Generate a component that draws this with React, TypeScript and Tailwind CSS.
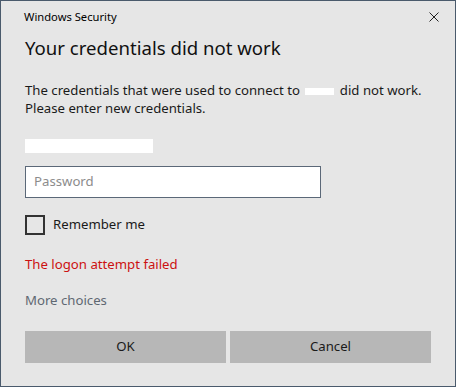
const App = () => {
  return (
    <div
      className="w-[456px] h-[387px] border border-[#4a5a6c] bg-[#e6e6e6] text-[#1a1a1a] flex flex-col"
      style={{ fontFamily: '"Noto Sans", "Open Sans", sans-serif' }}
    >
      {/* title bar */}
      <div className="flex items-center justify-between h-[32px] pl-[23px] pr-[16px]">
        <span className="text-[11.2px] leading-none text-black">Windows Security</span>
        <svg width="10" height="10" viewBox="0 0 10 10">
          <path d="M0.5 0.5 L9.5 9.5 M9.5 0.5 L0.5 9.5" stroke="#222" strokeWidth="1" />
        </svg>
      </div>

      <div className="flex flex-col px-[24px]">
        <h1 className="text-[18.6px] leading-[26px] mt-[2px] text-[#111]">Your credentials did not work</h1>

        <p className="text-[13.2px] leading-[18px] mt-[20px]">
          The credentials that were used to connect to{" "}
          <span className="inline-block w-[29px] h-[7px] bg-white align-middle mx-[2px]" />{" "}
          did not work.
          <br />
          Please enter new credentials.
        </p>

        <div className="w-[128px] h-[14px] bg-white mt-[22px]" />

        <div className="w-[296px] h-[32px] border border-[#5b6878] bg-white mt-[13px] flex items-center pl-[8px]">
          <span className="text-[13.2px] text-[#8c8c8c]">Password</span>
        </div>

        <div className="flex items-center gap-[8px] mt-[17px]">
          <div className="w-[20px] h-[20px] border-2 border-[#333]" />
          <span className="text-[13.2px]">Remember me</span>
        </div>

        <div className="text-[13.2px] text-[#cc1111] mt-[20px]">The logon attempt failed</div>

        <div className="text-[13.2px] text-[#5f6872] mt-[16px]">More choices</div>

        <div className="flex gap-[4px] mt-[20px]">
          <button className="w-[201px] h-[32px] bg-[#b7b7b7] text-[13.2px]">OK</button>
          <button className="w-[201px] h-[32px] bg-[#b7b7b7] text-[13.2px]">Cancel</button>
        </div>
      </div>
    </div>
  );
};

export default App;
